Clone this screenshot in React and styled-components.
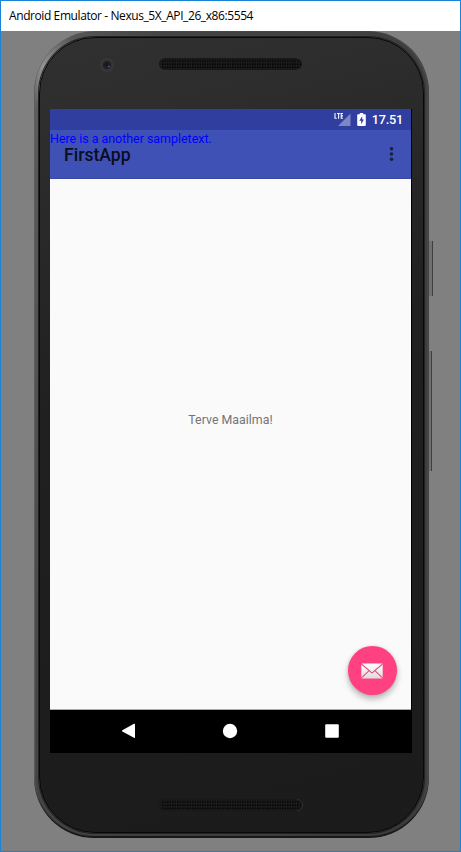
import React from "react";
import styled, { createGlobalStyle } from "styled-components";

const GlobalStyle = createGlobalStyle`
  * { box-sizing: border-box; }
  body { margin: 0; overflow: hidden; font-family: Roboto, "Liberation Sans", sans-serif; }
`;

const Window = styled.main`
  display: flex;
  flex-direction: column;
  width: 461px;
  height: 852px;
  border: 1px solid #1883d7;
  background: #808080;
`;

const TitleBar = styled.header`
  display: flex;
  align-items: center;
  flex: 0 0 30px;
  padding-left: 8px;
  background: #fff;
  color: #000;
  font: 12px/30px "Open Sans", "Noto Sans", sans-serif;
  letter-spacing: -0.41px;
  white-space: nowrap;
`;

const Stage = styled.div`
  display: flex;
  padding-left: 33px;
`;

const Phone = styled.section`
  width: 395px;
  height: 807px;
  padding: 6px 5px 5px;
  border-radius: 61px 61px 60px 60px;
  background:
    radial-gradient(circle at 8px 35px, rgba(160, 160, 160, 0.8), rgba(120, 120, 120, 0) 42px),
    linear-gradient(100deg, #626262 0%, #585858 5%, #444 24%, #3d3c3d 100%);
  box-shadow:
    inset 0 -2px 1px #171717,
    inset 1px 0 1px #686868,
    inset -2px 0 1px #4b494b;
`;

const Face = styled.div`
  display: flex;
  flex-direction: column;
  height: 796px;
  padding: 0 10px;
  border: 1px solid #080808;
  border-radius: 56px;
  background: linear-gradient(165deg, #303031 0%, #2d2d2d 12%, #202020 42%, #1b1b1c 100%);
  box-shadow: 0 0 0 1px #222;
`;

const TopBezel = styled.div`
  display: grid;
  grid-template-columns: 108px 146px 1fr;
  align-items: start;
  flex: 0 0 71px;
  padding-top: 19px;
`;

const Camera = styled.svg`
  display: block;
  margin: 0 0 0 49px;
  width: 16px;
  height: 16px;
`;

const SpeakerArt = styled.svg`
  display: block;
  width: 146px;
  height: 14px;
`;

const BottomBezel = styled.div`
  display: flex;
  padding: 45px 0 0 108px;
`;

const Screen = styled.div`
  position: relative;
  display: flex;
  flex-direction: column;
  flex: 0 0 644px;
  width: 362px;
  border-right: 1px solid #000;
  background: #fafafa;
`;

const StatusBar = styled.div`
  display: flex;
  align-items: center;
  justify-content: flex-end;
  flex: 0 0 21px;
  padding-right: 8px;
  background: #303f9f;
  color: #fff;
  font-size: 12.7px;
  font-weight: 500;
  line-height: 20px;
`;

const Signal = styled.svg`
  width: 17px;
  height: 15px;
  margin-right: 6px;
`;

const Battery = styled.svg`
  width: 9px;
  height: 13px;
  margin-right: 6px;
`;

const Clock = styled.time`
  letter-spacing: -0.2px;
`;

const Toolbar = styled.div`
  display: flex;
  align-items: center;
  justify-content: space-between;
  flex: 0 0 49px;
  padding: 0 14px;
  background: #3f51b5;
  border-bottom: 1px solid #3949a3;
`;

const AppTitle = styled.h1`
  margin: 2px 0 0;
  color: #0a0d20;
  font-size: 17.6px;
  font-weight: 500;
  line-height: 24px;
`;

const SampleText = styled.span`
  position: absolute;
  top: 22px;
  left: 0;
  color: #0000ff;
  font-size: 12.5px;
  letter-spacing: -0.04px;
  line-height: 16px;
  white-space: nowrap;
`;

const MenuButton = styled.button`
  display: flex;
  width: 12px;
  padding: 0;
  border: 0;
  background: none;
`;

const Content = styled.div`
  display: flex;
  align-items: center;
  justify-content: center;
  flex: 1;
  padding-bottom: 48px;
  border-bottom: 1px solid #a9aeaa;
  color: #757575;
  font-size: 12.4px;
  line-height: 16px;
`;

const MailButton = styled.button`
  position: absolute;
  right: 14.5px;
  bottom: 58px;
  display: flex;
  align-items: center;
  justify-content: center;
  width: 49px;
  height: 49px;
  padding: 0;
  border: 0;
  border-radius: 50%;
  background: #ff4081;
  box-shadow: 0 4px 6px rgba(0, 0, 0, 0.27), 0 0 3px rgba(0, 0, 0, 0.12);
`;

const NavigationBar = styled.nav`
  display: grid;
  grid-template-columns: repeat(3, 101.5px);
  justify-content: center;
  align-items: center;
  flex: 0 0 43px;
  padding: 0 1px 2px 0;
  background: #000;
`;

const NavButton = styled.button`
  display: flex;
  justify-content: center;
  padding: 0;
  border: 0;
  background: none;
`;

const SideKeys = styled.div`
  display: flex;
  flex-direction: column;
  padding-top: 210px;
`;

const SideKey = styled.div`
  width: ${(p) => p.$width}px;
  height: ${(p) => p.$height}px;
  margin-bottom: 55px;
  background: #716f70;
  border-right: 1px solid #403e40;
`;

function Speaker({ id }) {
  return (
    <SpeakerArt viewBox="0 0 146 14">
      <defs>
        <pattern id={id} x="4" y="3" width="5" height="3.2" patternUnits="userSpaceOnUse">
          <rect x="0" y="0.4" width="1.6" height="1.6" fill="#050505" />
          <rect x="2.5" y="0.4" width="1.6" height="1.6" fill="#080808" />
          <path d="M1.6 2.2h.8M4.1 2.2h.8" stroke="#303030" strokeWidth=".8" />
        </pattern>
      </defs>
      <rect x="1" y="1" width="144" height="12" rx="6" fill="#181818" />
      <path d="M139 1.4a5.6 5.6 0 0 1 0 11.2" fill="none" stroke="#3a3a3a" strokeWidth=".7" />
      <rect x="3" y="2.5" width="140" height="9" rx="4.5" fill={`url(#${id})`} />
    </SpeakerArt>
  );
}

export default function App() {
  return (
    <>
      <GlobalStyle />
      <Window>
        <TitleBar>Android Emulator - Nexus_5X_API_26_x86:5554</TitleBar>
        <Stage>
          <Phone>
            <Face>
              <TopBezel>
                <Camera viewBox="0 0 16 16">
                  <circle cx="8" cy="8" r="7.3" fill="#363637" />
                  <circle cx="8" cy="8" r="4.3" fill="#20202a" />
                  <circle cx="7.5" cy="7.5" r="2" fill="#181825" />
                  <circle cx="10" cy="9.5" r=".8" fill="#806860" />
                </Camera>
                <Speaker id="topGrille" />
              </TopBezel>
              <Screen>
                <StatusBar>
                  <Signal viewBox="0 0 17 15">
                    <path d="M16.5 1.5v12.5H4z" fill="#7c86c4" />
                    <path d="M1 1v5.3h2.3M3.3 1.5h3M4.8 1.5v5M9 1.5H7.3v4.8H9M7.3 3.9H9" fill="none" stroke="#303f9f" strokeWidth="2.2" />
                    <path d="M1 1v5.3h1.8M3 1.5h3.2M4.6 1.5v5.2M9 1.5H7.2v4.8H9M7.2 3.9H9" fill="none" stroke="#f5f6fc" strokeWidth="1.1" />
                  </Signal>
                  <Battery viewBox="0 0 9 13">
                    <path d="M2.8 0h3.4v1.3H8a.8.8 0 0 1 .8.8v10a.8.8 0 0 1-.8.8H1a.8.8 0 0 1-.8-.8v-10a.8.8 0 0 1 .8-.8h1.8z" fill="#fff" />
                    <path d="M5.2 3.2 2.3 7.7h1.9v3.5l2.7-4.8H5.2z" fill="#303f9f" />
                  </Battery>
                  <Clock>17.51</Clock>
                </StatusBar>
                <Toolbar>
                  <AppTitle>FirstApp</AppTitle>
                  <MenuButton aria-label="More options">
                    <svg width="12" height="18" viewBox="0 0 12 18">
                      <g fill="#182042">
                        <circle cx="6.5" cy="3.7" r="1.8" />
                        <circle cx="6.5" cy="9" r="1.8" />
                        <circle cx="6.5" cy="14.3" r="1.8" />
                      </g>
                    </svg>
                  </MenuButton>
                </Toolbar>
                <SampleText>Here is a another sampletext.</SampleText>
                <Content>Terve Maailma!</Content>
                <NavigationBar>
                  <NavButton aria-label="Back">
                    <svg width="16" height="16" viewBox="0 0 16 16">
                      <path d="M1.3 7.3 13 .8q1-.4 1 .6v12.9q0 1-1 .5L1.3 8.6Q.5 8 1.3 7.3z" fill="#fff" />
                    </svg>
                  </NavButton>
                  <NavButton aria-label="Home">
                    <svg width="16" height="16" viewBox="0 0 16 16">
                      <circle cx="8" cy="8" r="7.2" fill="#fff" />
                    </svg>
                  </NavButton>
                  <NavButton aria-label="Recent apps">
                    <svg width="16" height="16" viewBox="0 0 16 16">
                      <rect x="1.2" y="1.2" width="13.6" height="13.6" rx="1" fill="#fff" />
                    </svg>
                  </NavButton>
                </NavigationBar>
                <MailButton aria-label="Email">
                  <svg width="22" height="16" viewBox="0 0 22 16">
                    <defs>
                      <linearGradient id="paper" x2="0" y2="1">
                        <stop stopColor="#fff" />
                        <stop offset="1" stopColor="#ddd" />
                      </linearGradient>
                    </defs>
                    <rect x=".3" y=".4" width="21.4" height="15" rx="1" fill="url(#paper)" />
                    <path d="M.5 1 10 9.2q1 .8 2 0L21.5 1M.5 14.8l7.3-7M21.5 14.8l-7.3-7" fill="none" stroke="#ed4b81" strokeWidth="1.1" />
                  </svg>
                </MailButton>
              </Screen>
              <BottomBezel>
                <Speaker id="bottomGrille" />
              </BottomBezel>
            </Face>
          </Phone>
          <SideKeys>
            <SideKey $width={4} $height={55} />
            <SideKey $width={3} $height={120} />
          </SideKeys>
        </Stage>
      </Window>
    </>
  );
}
